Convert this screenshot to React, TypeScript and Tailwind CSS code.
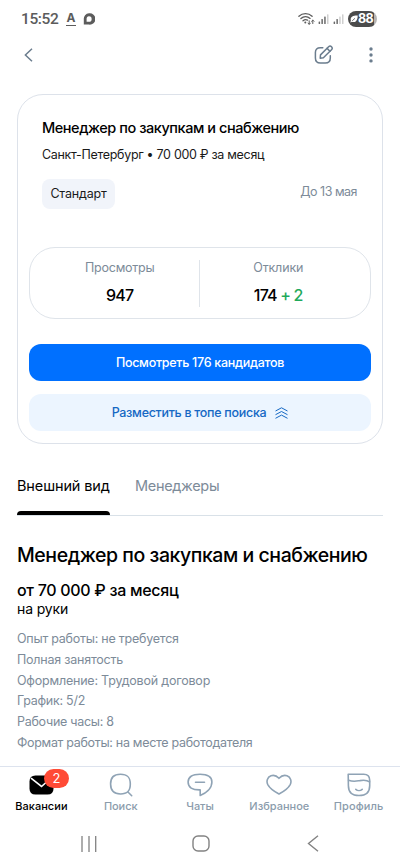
import type { ReactNode } from "react";
import clsx from "clsx";

const details = [
  { text: "Опыт работы: не требуется", className: "tracking-[-0.24px]" },
  { text: "Полная занятость", className: "tracking-[-0.22px]" },
  { text: "Оформление: Трудовой договор", className: "tracking-[-0.21px]" },
  { text: "График: 5/2", className: "tracking-[-0.27px]" },
  { text: "Рабочие часы: 8", className: "tracking-[-0.27px]" },
  { text: "Формат работы: на месте работодателя", className: "tracking-[-0.31px]" },
];

function Signal({ bars }: { bars: number }) {
  return (
    <svg width="12" height="12" viewBox="0 0 12 12">
      {[0, 1, 2, 3].map((i) => (
        <rect
          key={i}
          x={0.6 + i * 2.8}
          y={8.4 - i * 2.4}
          width="1.5"
          height={2.6 + i * 2.4}
          rx="0.5"
          fill={i < bars ? "#6a6a6a" : "#cfcfcf"}
        />
      ))}
    </svg>
  );
}

function StatusBar() {
  return (
    <div className="flex h-9 shrink-0 items-center pl-[21px] pr-[23px] pt-[2px] text-[#5c5c5c]">
      <span className="w-[38px] whitespace-nowrap pt-px font-['Roboto'] text-[15.5px] font-medium leading-none tracking-[-0.4px]">15:52</span>
      <span className="ml-[7px] flex h-[13px] w-[10px] items-start justify-center border-b-[1.5px] border-[#5c5c5c] text-[12px] font-bold leading-[10px]">A</span>
      <svg className="ml-[7px]" width="12" height="12" viewBox="0 0 12 12">
        <path d="M6 0.3a5.7 5.7 0 1 1 0 11.3H0.8V6.5A5.6 5.6 0 0 1 6 0.3Z" fill="#5c5c5c" />
        <path d="M6 3.2a2.8 2.8 0 1 1-0.3 5.6H3.6V6.4A2.9 2.9 0 0 1 6 3.2Z" fill="#fff" />
      </svg>
      <div className="ml-auto flex items-center">
        <svg width="17" height="14" viewBox="0 0 17 14" fill="none" stroke="#5c5c5c" strokeWidth="1.3" strokeLinecap="round">
          <path d="M0.9 4.2C4.6 0.7 10.4 0.7 14.1 4.2" />
          <path d="M2.9 6.6C5.6 4.1 9.4 4.1 12.1 6.4" />
          <path d="M5 8.8C6.5 7.5 8.3 7.4 9.5 8.1" />
          <circle cx="7.3" cy="10.5" r="1" fill="#5c5c5c" stroke="none" />
          <path d="M11.2 8.8v3.4M10 11.1l1.2 1.2 1.2-1.2M14.8 11.6V8.2M13.6 9.3l1.2-1.2L16 9.3" strokeWidth="1" />
        </svg>
        <div className="ml-[3px] flex gap-[3px]">
          <Signal bars={3} />
          <Signal bars={2} />
        </div>
        <div className="ml-[3px] flex h-[16px] w-[29px] items-center overflow-hidden rounded-full bg-[linear-gradient(90deg,#4b4b4b_90%,#b5b5b5_90%)] pl-[2px]">
          <svg width="8" height="8" viewBox="0 0 8 8">
            <path d="M7.7 0.4C3.5 0.2 0.6 1.5 0.7 4.4c0 1 .3 1.5.3 1.5L.2 7.1l.6.5 1-.9C5.8 8 7.7 5.2 7.7 0.4Z" fill="#fff" />
            <path d="M2.2 5.8 5 3.3" stroke="#4b4b4b" strokeWidth="0.8" />
          </svg>
          <span className="text-[12.5px] font-bold leading-none tracking-[-0.7px] text-white">88</span>
        </div>
      </div>
    </div>
  );
}

function Header() {
  return (
    <div className="flex h-[38px] shrink-0 items-center justify-between pl-[24px] pr-[27px]">
      <svg width="9" height="14" viewBox="0 0 9 14" fill="none" stroke="#6b7d8e" strokeWidth="1.5">
        <path d="M8 0.8 1.4 7 8 13.2" />
      </svg>
      <div className="flex items-center gap-[35px]">
        <svg width="20" height="20" viewBox="0 0 20 20" fill="none" stroke="#6b7d8e" strokeWidth="1.5" strokeLinecap="round" strokeLinejoin="round">
          <path d="M8.8 2.7H6.4C3 2.7 1.4 4.4 1.4 7.6v5.5c0 3.5 1.6 5 5 5h4.9c3.4 0 5-1.5 5-5v-2.4" />
          <path d="M6.5 9.9 14.6 1.8c1-1 2-.9 2.9 0 .9.9 1 1.9 0 2.9L9.4 12.8l-3.2.4Z" />
          <path d="m13.1 3.4 2.8 2.8" />
        </svg>
        <svg width="4" height="16" viewBox="0 0 4 16" fill="#6b7d8e">
          <circle cx="2" cy="2" r="1.7" />
          <circle cx="2" cy="8" r="1.7" />
          <circle cx="2" cy="13.9" r="1.7" />
        </svg>
      </div>
    </div>
  );
}

function VacancyCard() {
  return (
    <section className="mx-[17px] mt-5 flex h-[350px] shrink-0 flex-col rounded-[26px] border border-[#dde2ea] px-[11px]">
      <div className="flex flex-col px-[13px] pt-[22px]">
        <h2 className="text-[14.5px] font-medium leading-[22px] tracking-[-0.45px]">Менеджер по закупкам и снабжению</h2>
        <p className="mt-[7px] text-[12.5px] leading-[18px] tracking-[-0.31px] text-[#1a1a1a]">Санкт-Петербург • 70 000 ₽ за месяц</p>
        <div className="mt-[15px] flex justify-between">
          <span className="flex h-[30px] w-[73px] items-center justify-center rounded-[8px] bg-[#f1f4fa] text-[12.5px] tracking-[-0.2px] text-[#1a1a1a]">Стандарт</span>
          <span className="pr-px pt-[4px] text-[12.5px] leading-[18px] tracking-[-0.5px] text-[#7d8b99]">До 13 мая</span>
        </div>
      </div>

      <div className="mt-[38px] flex h-[72px] shrink-0 items-center rounded-[26px] border border-[#dfe4ea]">
        <div className="flex flex-1 flex-col items-center pb-[2px] pl-[11px]">
          <span className="text-[12.5px] leading-[18px] tracking-[-0.25px] text-[#7d8b99]">Просмотры</span>
          <span className="mt-[8px] text-[16px] font-medium leading-[20px] tracking-[-0.8px]">947</span>
        </div>
        <div className="h-[47px] w-px bg-[#dfe4ea]" />
        <div className="flex flex-1 flex-col items-center pb-[2px] pr-[13px]">
          <span className="text-[12.5px] leading-[18px] tracking-[-0.15px] text-[#7d8b99]">Отклики</span>
          <span className="mt-[8px] whitespace-pre text-[16px] font-medium leading-[20px] tracking-[-0.8px]">
            174<span className="text-[#1fa95b]"> + 2</span>
          </span>
        </div>
      </div>

      <button className="mt-[25px] h-[37px] shrink-0 rounded-[12px] bg-[#0070ff] pt-[2px] text-[12.5px] font-medium tracking-[-0.28px] text-white">
        Посмотреть 176 кандидатов
      </button>
      <button className="mt-[13px] flex h-[37px] shrink-0 items-center justify-center gap-[9px] rounded-[12px] bg-[#ecf5ff] text-[12.5px] font-medium tracking-[-0.29px] text-[#1568c4]">
        <span className="pt-[2px]">Разместить в топе поиска</span>
        <svg width="13" height="12" viewBox="0 0 13 12" fill="none" stroke="#1568c4" strokeWidth="1">
          <path d="M0.5 4 6.5 0.8l6 3.2M0.5 7.7l6-3.2 6 3.2M0.5 11.3l6-3.2 6 3.2" />
        </svg>
      </button>
    </section>
  );
}

function Tabs() {
  return (
    <div className="mx-[17px] mt-[24px] flex h-[48px] shrink-0 gap-[25px] border-b border-[#d9e1e8] text-[14.5px] leading-[36px]">
      <div className="flex w-[93px] flex-col justify-between whitespace-nowrap">
        <span className="tracking-[-0.12px]">Внешний вид</span>
        <span className="h-[4px] rounded-t-[4px] bg-black" />
      </div>
      <span className="tracking-[-0.32px] text-[#7d8b99]">Менеджеры</span>
    </div>
  );
}

function Description() {
  return (
    <section className="flex flex-1 flex-col whitespace-nowrap px-[17px] pt-[25px]">
      <h1 className="text-[19.5px] font-medium leading-[28px] tracking-[-0.45px]">Менеджер по закупкам и снабжению</h1>
      <p className="mt-[10px] text-[16px] font-medium leading-[22px] tracking-[-0.3px]">от 70 000 ₽ за месяц</p>
      <p className="text-[14px] leading-[16px] tracking-[-0.15px]">на руки</p>
      <ul className="mt-[12px] text-[12.5px] leading-[20.75px] text-[#7d8b99]">
        {details.map((item) => (
          <li key={item.text} className={item.className}>{item.text}</li>
        ))}
      </ul>
    </section>
  );
}

function NavItem({ label, active, className, children }: { label: string; active?: boolean; className: string; children: ReactNode }) {
  return (
    <div className="flex w-[79.3px] flex-col items-center">
      <div className="relative flex h-[24px] items-center">{children}</div>
      <span className={clsx("mt-[2px] whitespace-nowrap text-[11px] font-medium leading-[14px]", active ? "text-black" : "text-[#8b9cac]", className)}>
        {label}
      </span>
    </div>
  );
}

function BottomNav() {
  const stroke = { fill: "none", stroke: "#8fa3b5", strokeWidth: 1.6, strokeLinecap: "round", strokeLinejoin: "round" } as const;
  return (
    <nav className="flex h-[53px] shrink-0 justify-center border-t border-[#dde3ee] pt-[6px]">
      <NavItem label="Вакансии" active className="tracking-[0.05px]">
        <svg width="25" height="20" viewBox="0 0 25 20">
          <path d="M6.5 0.5h12q6 0 6 6v7q0 6-6 6h-12q-6 0-6-6v-7q0-6 6-6Z" />
          <path d="m2 3.2 10.5 8.3L22 3" fill="none" stroke="#fff" strokeWidth="1.6" />
        </svg>
        <span className="absolute -top-[4px] left-[15px] flex h-[19px] w-[25px] items-center justify-center rounded-full bg-[#ff4b36] text-[13px] leading-none text-white">2</span>
      </NavItem>
      <NavItem label="Поиск" className="tracking-[-0.1px]">
        <svg width="24" height="24" viewBox="0 0 24 24" {...stroke}>
          <path d="M11.5 1.2c7 0 9.8 3 9.8 9.9s-2.8 9.9-9.8 9.9-9.9-3-9.9-9.9 2.9-9.9 9.9-9.9ZM18.7 18.8l4 3.9" />
        </svg>
      </NavItem>
      <NavItem label="Чаты" className="tracking-[-0.1px]">
        <svg width="26" height="24" viewBox="0 0 26 24" {...stroke}>
          <path d="M13 1.3c7.8 0 11.9 2.7 11.9 7.8 0 6.6-6.1 11.2-11.7 13.3v-5.5C5.2 17.1 1.1 14.4 1.1 9.1S5.2 1.3 13 1.3ZM8.5 9.3h9" />
        </svg>
      </NavItem>
      <NavItem label="Избранное" className="tracking-[0px]">
        <svg width="26" height="22" viewBox="0 0 26 22" {...stroke}>
          <path d="M13 4.3C10.4 1.5 7.8 0.8 5 1.8 1.3 3.2.1 7.1 1.8 10.6 3.6 14.1 8.3 17.5 13 20c4.7-2.5 9.4-5.9 11.2-9.4 1.7-3.5.5-7.4-3.2-8.8-2.8-1-5.4-.3-8 2.5Z" />
        </svg>
      </NavItem>
      <NavItem label="Профиль" className="tracking-[0.1px]">
        <svg width="24" height="24" viewBox="0 0 24 24" {...stroke}>
          <path d="M1.2 1.2h15.500c4 0 6 2.300 6 6v5.500c0 6.800-3.500 9.800-10.700 9.800S1.400 19.500 1.400 12.700Z" />
          <path d="M1.6 7.2c4.800 1.900 8 .9 11.200.4 3.900-.7 7.200-.6 9.800 1.300M8.800 16.300c1.800 1.600 4.600 1.600 6.400 0" />
        </svg>
      </NavItem>
    </nav>
  );
}

function SystemNav() {
  return (
    <div className="flex h-[48px] shrink-0 items-center justify-between pl-[80px] pr-[81px] pt-[1px]">
      <svg width="18" height="16" viewBox="0 0 18 16" stroke="#828282" strokeWidth="1.3">
        <path d="M2 0v16M9 0v16M15.7 0v16" />
      </svg>
      <svg className="mr-[4px]" width="18" height="17" viewBox="0 0 18 17" fill="none" stroke="#828282" strokeWidth="1.4">
        <rect x="1" y="1" width="16" height="15" rx="5" />
      </svg>
      <svg width="12" height="17" viewBox="0 0 12 17" fill="none" stroke="#828282" strokeWidth="1.4">
        <path d="M11 0.8 1.5 8.5 11 16.2" />
      </svg>
    </div>
  );
}

export default function App() {
  return (
    <main className="flex h-[867px] w-[400px] flex-col overflow-hidden bg-white font-['Inter',sans-serif] text-black">
      <StatusBar />
      <Header />
      <VacancyCard />
      <Tabs />
      <Description />
      <BottomNav />
      <SystemNav />
    </main>
  );
}
